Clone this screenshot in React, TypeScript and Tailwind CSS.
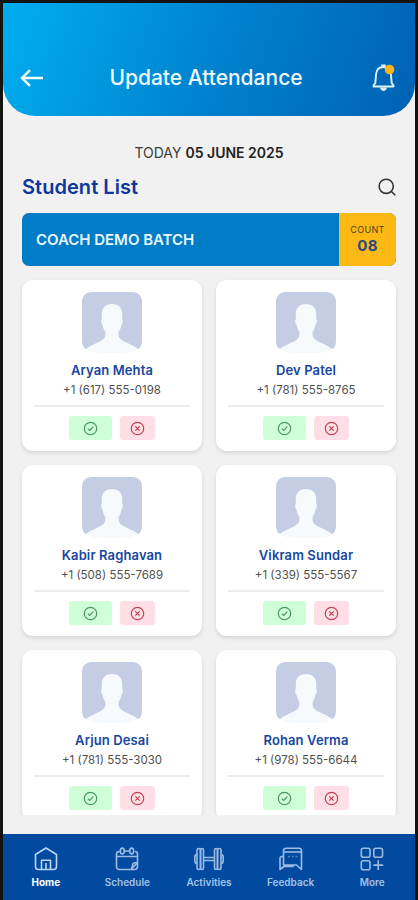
import type { ReactNode } from 'react';

type Student = {
  name: string;
  phone: string;
};

const students: Student[] = [
  { name: 'Aryan Mehta', phone: '+1 (617) 555-0198' },
  { name: 'Dev Patel', phone: '+1 (781) 555-8765' },
  { name: 'Kabir Raghavan', phone: '+1 (508) 555-7689' },
  { name: 'Vikram Sundar', phone: '+1 (339) 555-5567' },
  { name: 'Arjun Desai', phone: '+1 (781) 555-3030' },
  { name: 'Rohan Verma', phone: '+1 (978) 555-6644' },
];

export default function App() {
  return (
    <div className="h-[900px] w-[418px] overflow-hidden bg-[#15130f] pt-[3px] pr-[3px] pl-[3px] font-['Inter',sans-serif]">
      <div className="flex h-full flex-col bg-[#f1f1f1]">
        <Header />
        <main className="flex min-h-0 flex-1 flex-col px-[19px] pt-[27px]">
          <p className="text-center text-[14px] leading-5 text-[#3c3c3c]">
            TODAY <span className="font-semibold text-[#222]">05 JUNE 2025</span>
          </p>
          <div className="mt-[10px] flex h-7 items-center justify-between">
            <h2 className="text-[20px] leading-7 font-semibold tracking-[0.05px] text-[#0f359f]">
              Student List
            </h2>
            <SearchIcon />
          </div>
          <BatchBanner />
          <div className="-mx-[10px] mt-[6px] h-[543px] overflow-hidden px-[10px] pt-2">
            <div className="grid grid-cols-2 gap-x-[14px] gap-y-[14px]">
              {students.map((student) => (
                <StudentCard key={student.name} student={student} />
              ))}
            </div>
          </div>
        </main>
        <BottomNav />
      </div>
    </div>
  );
}

function Header() {
  return (
    <header className="flex h-[113px] shrink-0 items-center justify-between rounded-b-[32px] bg-[linear-gradient(108deg,#00aeef_0%,#0083cf_50%,#0061b3_100%)] pt-[37px] pr-[20px] pl-[17px]">
      <svg width="24" height="18" viewBox="0 0 24 18" fill="none" stroke="#effaff" strokeWidth="2.5">
        <path d="M23 9H2M10 1.200 2 9l8 7.800" />
      </svg>
      <h1 className="mr-[4px] text-[21px] font-medium text-[#eefaff]">Update Attendance</h1>
      <BellIcon />
    </header>
  );
}

function BellIcon() {
  return (
    <svg width="23" height="28" viewBox="0 0 23 28" fill="none">
      <path
        d="M1.500 22.500h20v-1l-1.800-2.500-.8-9c-.4-4.300-3.200-7-7.400-7S4.500 5.700 4.100 10l-.8 9-1.800 2.500Z"
        stroke="#e3f1ff"
        strokeWidth="1.900"
        strokeLinejoin="round"
      />
      <path d="M10 2.800V1.200h3v1.600" stroke="#e3f1ff" strokeWidth="1.500" />
      <path d="M8 23.500h7c-.4 2.300-1.600 3.500-3.500 3.500S8.400 25.800 8 23.500Z" fill="#dcebfb" />
      <circle cx="17.500" cy="5.500" r="4.800" fill="#f9b31c" />
    </svg>
  );
}

function SearchIcon() {
  return (
    <svg width="18" height="18" viewBox="0 0 18 18" fill="none" stroke="#333" strokeWidth="1.600">
      <circle cx="8.200" cy="8.300" r="7.100" />
      <path d="m13.200 13.300 4 4" />
    </svg>
  );
}

function BatchBanner() {
  return (
    <section className="mt-3 flex h-[53px] shrink-0 overflow-hidden rounded-[7px] bg-[#007cc6]">
      <div className="flex flex-1 items-center pt-px pl-[14px] text-[15px] font-semibold tracking-[-0.02px] text-[#e9f6ff]">
        COACH DEMO BATCH
      </div>
      <div className="flex w-[57px] flex-col items-center bg-[#fdb913] pt-[11px]">
        <span className="text-[9px] leading-3 tracking-[0.35px] text-[#4c401f]">COUNT</span>
        <span className="text-[15px] leading-5 font-bold tracking-[0.3px] text-[#27488a]">08</span>
      </div>
    </section>
  );
}

function StudentCard({ student }: { student: Student }) {
  return (
    <article className="flex h-[171px] flex-col items-center rounded-[11px] bg-white px-3 pt-3 shadow-[0_2px_4px_rgba(0,0,0,0.12)]">
      <Avatar />
      <h3 className="mt-[8px] text-[13px] leading-[18px] font-semibold tracking-[0.12px] text-[#1747a0]">
        {student.name}
      </h3>
      <p className="mt-[3px] text-[11.5px] leading-4 text-[#505050]">{student.phone}</p>
      <div className="mt-[7px] h-[2px] w-full shrink-0 bg-[#ebebeb]" />
      <div className="mt-[9px] flex gap-2">
        <button
          aria-label="Mark present"
          className="flex h-6 w-[43px] items-center justify-center rounded-[3px] bg-[#ceffd7]"
        >
          <StatusIcon present />
        </button>
        <button
          aria-label="Mark absent"
          className="flex h-6 w-[35px] items-center justify-center rounded-[3px] bg-[#ffdfe5]"
        >
          <StatusIcon />
        </button>
      </div>
    </article>
  );
}

function Avatar() {
  return (
    <svg className="shrink-0" width="60" height="61" viewBox="0 0 60 61">
      <path
        d="M10 0h40c6 0 10 4 10 10v39c0 4-1.500 7-4 8H4c-2.500-1-4-4-4-8V10C0 4 4 0 10 0Z"
        fill="#c5cde5"
      />
      <path
        d="M30 12c-6.500 0-10.200 3.800-10.200 10v5c-1 .7-.8 4.500.8 5.800.5 3 1.200 5 2.800 7v3.200c-.5 4.500-4.900 6.200-9.400 8.200-4 2-7.500 3.600-10 5.800 4 3 9 4 13 4h26c4 0 9-1 13-4-2.500-2.200-6-3.800-10-5.800-4.500-2-8.900-3.700-9.400-8.200v-3.200c1.600-2 2.300-4 2.800-7 1.600-1.300 1.800-5.100.8-5.800v-5c0-6.200-3.700-10-10.200-10Z"
        fill="#f7fafd"
      />
    </svg>
  );
}

function StatusIcon({ present = false }: { present?: boolean }) {
  return (
    <svg
      width="15"
      height="15"
      viewBox="0 0 15 15"
      fill="none"
      stroke={present ? '#4a9660' : '#bd4354'}
      strokeWidth="1.200"
    >
      <circle cx="7.500" cy="7.500" r="6.200" />
      {present ? (
        <path d="m4.800 7.600 1.900 1.800 3.600-3.700" />
      ) : (
        <path d="m5.300 5.300 4.400 4.400m0-4.400L5.300 9.700" />
      )}
    </svg>
  );
}

function BottomNav() {
  return (
    <nav className="grid h-[66px] shrink-0 grid-cols-5 bg-[#014aa0] px-[2px] pt-[13px]">
      <NavItem label="Home" active>
        <path d="M1.500 7.500 12 1l10.500 6.500V19.500c0 2-1 3-3 3h-15c-2 0-3-1-3-3Z" />
        <path d="M7.500 22.500v-9.300h9v9.300M12 16v6.500" />
      </NavItem>
      <NavItem label="Schedule">
        <path d="M5 4.500H4C2.500 4.500 1.500 5.500 1.500 7v12.500c0 2 1 3 3 3H16l6.500-7V7c0-1.500-1-2.500-2.500-2.500M9.500 4h5M1.500 9.500h21M16 22.500c1.500-1.500 1.500-4.500 2-6 1-1 3-1 4.500-1v4c0 2-1 3-3 3Z" />
        <ellipse cx="7.300" cy="4" rx="2" ry="2.900" />
        <ellipse cx="16.700" cy="4" rx="2" ry="2.900" />
      </NavItem>
      <NavItem label="Activities" wide>
        <path d="M9.500 10.500h11M9.500 13.500h11M3 7.500C.8 7.500.8 9 .8 12S.8 16.500 3 16.500M27 7.500c2.200 0 2.200 1.500 2.200 4.500s0 4.500-2.200 4.500" />
        <rect x="3" y="1.500" width="3.500" height="21" rx="1.700" />
        <rect x="6.500" y="1.500" width="3" height="21" rx="1.500" />
        <rect x="20.500" y="1.500" width="3" height="21" rx="1.500" />
        <rect x="23.500" y="1.500" width="3.500" height="21" rx="1.700" />
      </NavItem>
      <NavItem label="Feedback">
        <path d="M4.500 16V3.500c0-1.500 1-2.300 2.500-2.300h13c1.500 0 2.500.8 2.500 2.300v19L17.500 18h-11M4.500 9.500H3C1.700 9.500 1 10.300 1 11.500v11L5 19.500h9V18M4.500 16v2H8" />
        <path d="M4.500 5h18" />
        <path d="M9 9.500h2M12.700 9.500h2M16.400 9.500h2" strokeOpacity="0.5" />
      </NavItem>
      <NavItem label="More">
        <rect x="1.300" y="1.300" width="8.700" height="9" rx="2" />
        <rect x="13.800" y="1.300" width="8.700" height="9" rx="2" />
        <rect x="1.300" y="13.700" width="8.700" height="9" rx="2" />
        <path d="M18.200 13.200V23M13.300 18.100h9.900" />
      </NavItem>
    </nav>
  );
}

function NavItem({
  label,
  active = false,
  wide = false,
  children,
}: {
  label: string;
  active?: boolean;
  wide?: boolean;
  children: ReactNode;
}) {
  const color = active ? 'text-white' : 'text-[#a5c2e7]';

  return (
    <div className={`flex flex-col items-center ${color}`}>
      <svg
        width={wide ? 30 : 24}
        height="24"
        viewBox={wide ? '0 0 30 24' : '0 0 24 24'}
        fill="none"
        stroke={active ? '#bcd6f5' : '#9dbbe3'}
        strokeWidth="1.600"
        strokeLinejoin="round"
      >
        {children}
      </svg>
      <span
        className={`mt-[4px] text-[10px] leading-[14px] ${active ? 'font-bold' : 'font-semibold'}`}
      >
        {label}
      </span>
    </div>
  );
}
